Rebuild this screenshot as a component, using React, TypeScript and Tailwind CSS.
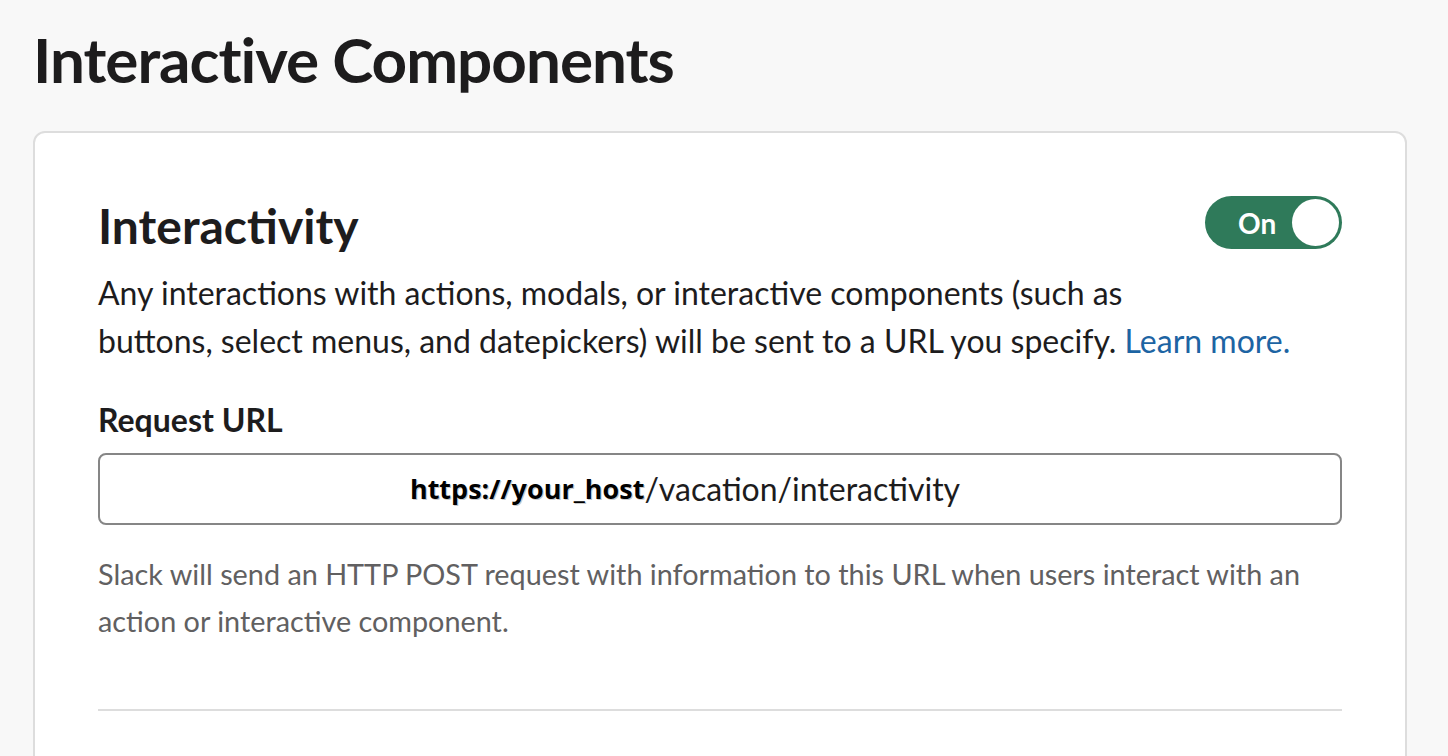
import React from 'react';

const App: React.FC = () => {
    return (
        <div className="min-h-screen w-full bg-[#f8f8f8] overflow-hidden" style={{ fontFamily: 'Lato, "Noto Sans", sans-serif' }}>
            <div className="pl-[33px] pr-[41px] pt-[19px]">
                {/* Page title */}
                <h1 className="text-[62px] font-bold leading-[80px] text-[#1d1c1d] tracking-[-1px]">Interactive Components</h1>

                {/* Card */}
                <section className="mt-[32px] bg-white border-2 border-[#dddddd] rounded-[12px] px-[63px] pt-[65px] h-[700px]">
                    <div className="flex items-start justify-between">
                        <h2 className="text-[48px] font-bold leading-[56px] text-[#1d1c1d]">Interactivity</h2>
                        <button
                            className="-mt-[2px] flex items-center justify-between w-[137px] h-[53px] rounded-full bg-[#2f7a5a] pl-[33px] pr-[3px]"
                            aria-label="Toggle interactivity"
                        >
                            <span className="text-white text-[28px] font-bold leading-none">On</span>
                            <span className="w-[47px] h-[47px] rounded-full bg-white"></span>
                        </button>
                    </div>

                    <p className="mt-[15px] text-[32px] leading-[48px] text-[#1d1c1d]">
                        Any interactions with actions, modals, or interactive components (such as
                        <br />
                        buttons, select menus, and datepickers) will be sent to a URL you specify.{' '}
                        <a href="#" className="text-[#1d64a3]">Learn more.</a>
                    </p>

                    <label className="block mt-[35px] text-[32px] font-bold leading-[40px] text-[#1d1c1d]">Request URL</label>

                    <div className="mt-[13px] h-[72px] border-2 border-[#868686] rounded-[8px] flex items-center justify-center pr-[70px] text-[32px] text-[#1d1c1d]">
                        <span
                            className="font-bold text-black text-[27px]"
                            style={{ fontFamily: '"Open Sans", "DejaVu Sans", sans-serif', textShadow: '0 0 2px #fff, 1px 1px 0 #bbb' }}
                        >
                            https://your_host
                        </span>
                        <span>/vacation/interactivity</span>
                    </div>

                    <p className="mt-[26px] text-[28.8px] leading-[47px] text-[#616061]">
                        Slack will send an HTTP POST request with information to this URL when users interact with an
                        <br />
                        action or interactive component.
                    </p>

                    <div className="mt-[64px] h-[2px] bg-[#dddddd]"></div>
                </section>
            </div>
        </div>
    );
};

export default App;
